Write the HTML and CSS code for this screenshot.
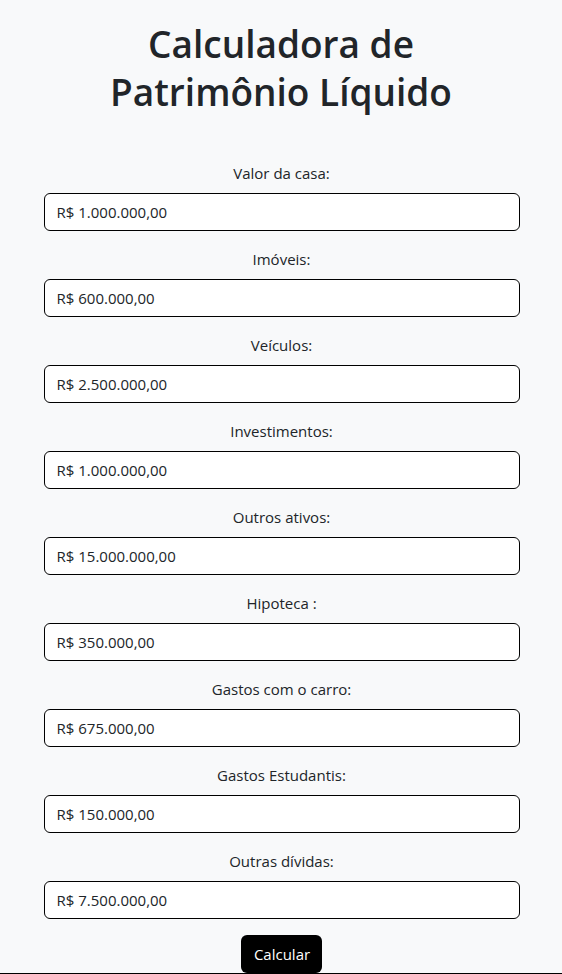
FILE: index.html
```html
<!DOCTYPE html>
<html lang="pt-BR">
<head>
<meta charset="utf-8">
<title>Calculadora de Patrimônio Líquido</title>
<link rel="stylesheet" href="styles.css">
</head>
<body>
<main class="page">
  <h1 class="title">Calculadora de<br>Patrimônio Líquido</h1>
  <form class="form">
    <div class="field">
      <label class="label" for="casa">Valor da casa:</label>
      <input class="input" id="casa" type="text" value="R$ 1.000.000,00">
    </div>
    <div class="field">
      <label class="label" for="imoveis">Imóveis:</label>
      <input class="input" id="imoveis" type="text" value="R$ 600.000,00">
    </div>
    <div class="field">
      <label class="label" for="veiculos">Veículos:</label>
      <input class="input" id="veiculos" type="text" value="R$ 2.500.000,00">
    </div>
    <div class="field">
      <label class="label" for="invest">Investimentos:</label>
      <input class="input" id="invest" type="text" value="R$ 1.000.000,00">
    </div>
    <div class="field">
      <label class="label" for="outros">Outros ativos:</label>
      <input class="input" id="outros" type="text" value="R$ 15.000.000,00">
    </div>
    <div class="field">
      <label class="label" for="hipoteca">Hipoteca :</label>
      <input class="input" id="hipoteca" type="text" value="R$ 350.000,00">
    </div>
    <div class="field">
      <label class="label" for="carro">Gastos com o carro:</label>
      <input class="input" id="carro" type="text" value="R$ 675.000,00">
    </div>
    <div class="field">
      <label class="label" for="estud">Gastos Estudantis:</label>
      <input class="input" id="estud" type="text" value="R$ 150.000,00">
    </div>
    <div class="field">
      <label class="label" for="dividas">Outras dívidas:</label>
      <input class="input" id="dividas" type="text" value="R$ 7.500.000,00">
    </div>
    <button class="btn" type="button">Calcular</button>
  </form>
  <div class="footer-line"></div>
</main>
</body>
</html>
```
FILE: styles.css
```css
* { box-sizing: border-box; }
html, body {
  margin: 0;
  padding: 0;
  background: #f8f9fa;
}
body {
  font-family: "Open Sans", "Noto Sans", "Liberation Sans", sans-serif;
  color: #212529;
}
.page {
  display: flex;
  flex-direction: column;
  align-items: center;
}
.title {
  margin: 20px 0 46px;
  font-size: 37px;
  line-height: 48px;
  font-weight: 600;
  text-align: center;
  color: #212529;
}
.form {
  width: 476px;
  margin-left: 1px;
  display: flex;
  flex-direction: column;
  align-items: center;
  gap: 17px;
}
.field {
  width: 100%;
  display: flex;
  flex-direction: column;
  align-items: center;
  gap: 7px;
}
.label {
  font-size: 15px;
  line-height: 24px;
  margin-top: -1px;
  margin-bottom: 1px;
  color: #212529;
}
.input {
  width: 100%;
  height: 38px;
  border: 1px solid #000;
  border-radius: 6px;
  background: #fff;
  padding: 0 12px;
  font-family: inherit;
  font-size: 15px;
  color: #212529;
  outline: none;
}
.btn {
  margin-top: -1px;
  height: 38px;
  padding: 0 12px 0 13px;
  border: none;
  border-radius: 6px;
  background: #000;
  color: #fff;
  font-family: inherit;
  font-size: 15px;
}
.footer-line {
  width: 100%;
  border-top: 1px solid #000;
}
```
